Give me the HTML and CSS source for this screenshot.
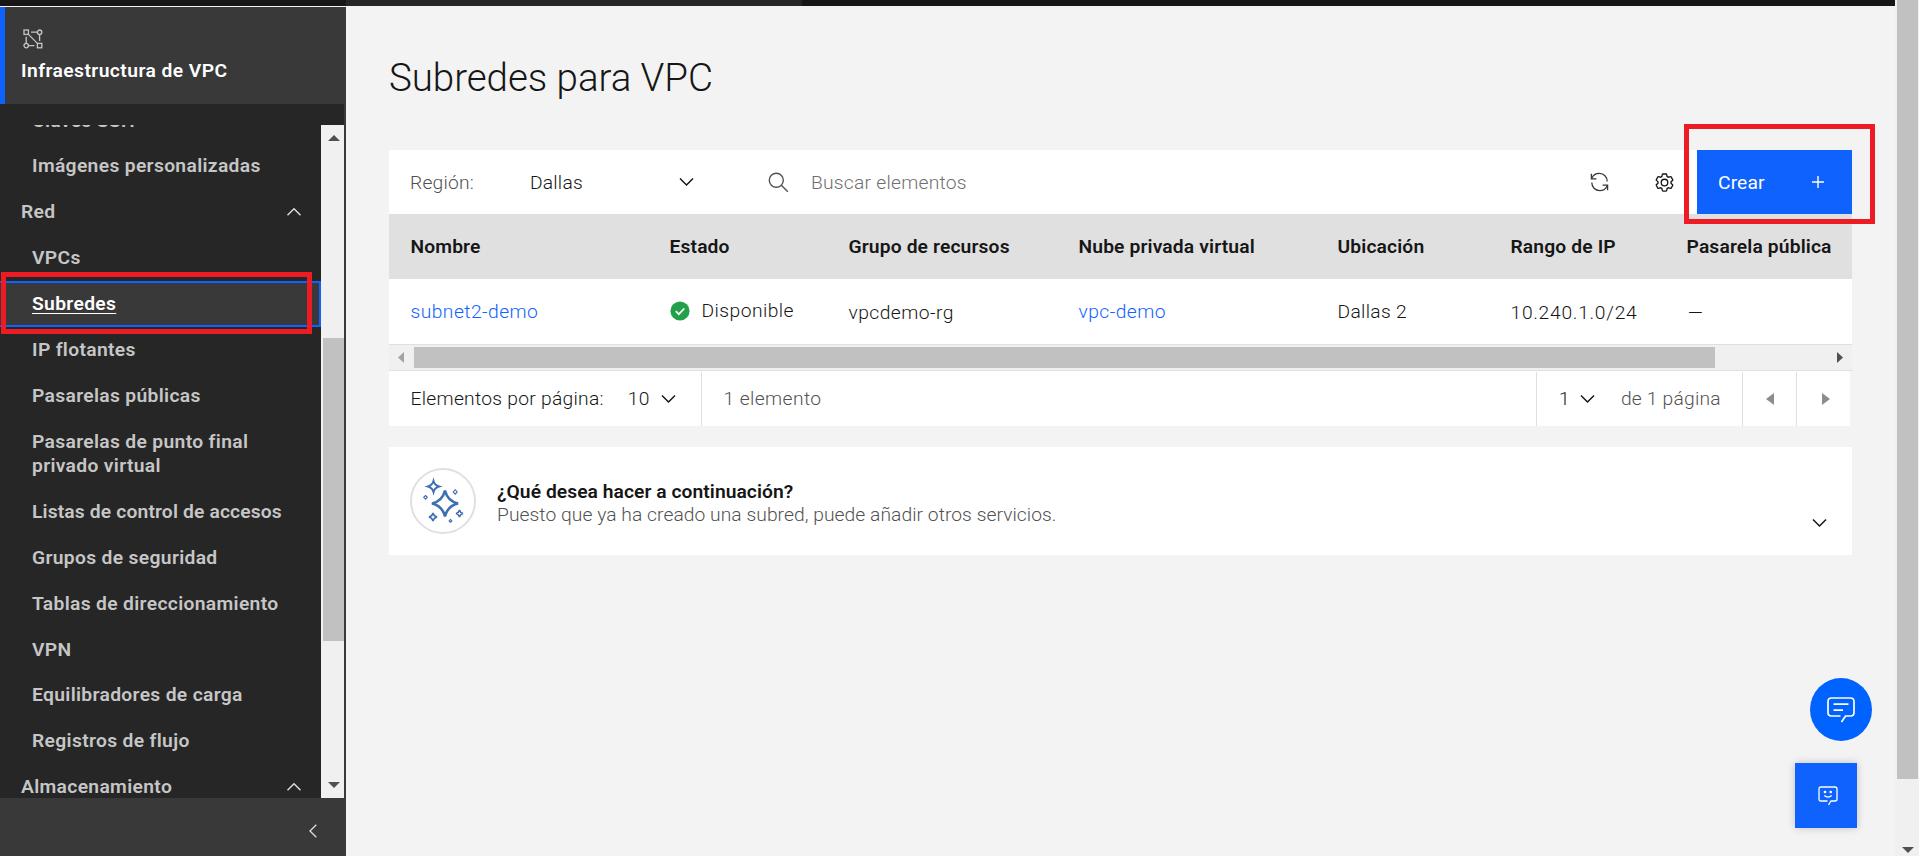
FILE: index.html
```
<!DOCTYPE html>
<html lang="es">
<head>
<meta charset="utf-8">
<title>Subredes para VPC</title>
<link rel="stylesheet" href="styles.css">
</head>
<body>
<div class="topbar"></div>
<div class="shell">
  <aside class="sidebar">
    <header class="side-head">
      <svg class="vpc-icon" width="20" height="20" viewBox="0 0 20 20" fill="none" stroke="#c6c6c6" stroke-width="1.3"><rect x="1" y="1" width="4.4" height="4.4"/><rect x="14.4" y="14.4" width="4.4" height="4.4"/><circle cx="16.6" cy="3.2" r="2.2"/><circle cx="3.2" cy="16.6" r="2.2"/><path d="M8 3.2h6.4M16.6 5.4V12M3.2 7.8v6.6M5.4 16.6h6M5.4 5.4l9 9"/></svg>
      <div class="side-title">Infraestructura de VPC</div>
    </header>
    <div class="nav-wrap">
      <nav class="nav">
        <a class="item">Claves SSH</a>
        <a class="item">Imágenes personalizadas</a>
        <a class="item group">Red <svg width="16" height="10" viewBox="0 0 16 10" fill="none" stroke="#e0e0e0" stroke-width="1.4"><path d="M1.5 8.3 8 1.8l6.500 6.500"/></svg></a>
        <a class="item">VPCs</a>
        <a class="item current"><span>Subredes</span></a>
        <a class="item">IP flotantes</a>
        <a class="item">Pasarelas públicas</a>
        <a class="item tall">Pasarelas de punto final<br>privado virtual</a>
        <a class="item acl">Listas de control de accesos</a>
        <a class="item">Grupos de seguridad</a>
        <a class="item">Tablas de direccionamiento</a>
        <a class="item">VPN</a>
        <a class="item short">Equilibradores de carga</a>
        <a class="item">Registros de flujo</a>
        <a class="item group">Almacenamiento <svg width="16" height="10" viewBox="0 0 16 10" fill="none" stroke="#e0e0e0" stroke-width="1.400"><path d="M1.500 8.300 8 1.800l6.500 6.500"/></svg></a>
      </nav>
      <div class="vscroll">
        <svg width="12" height="6" viewBox="0 0 12 6"><path d="M0 6 6 0l6 6z" fill="#505050"/></svg>
        <div class="vthumb"></div>
        <svg width="12" height="6" viewBox="0 0 12 6"><path d="M0 0l6 6 6-6z" fill="#505050"/></svg>
      </div>
    </div>
    <footer class="side-foot"><svg width="10" height="14" viewBox="0 0 10 14" fill="none" stroke="#e0e0e0" stroke-width="1.3"><path d="M8.300 .8 2 7l6.300 6.200"/></svg></footer>
  </aside>

  <main class="main">
    <h1>Subredes para VPC</h1>
    <section class="card">
      <div class="toolbar">
        <label class="region">Región:</label>
        <div class="select"><span>Dallas</span><svg width="15" height="10" viewBox="0 0 15 10" fill="none" stroke="#161616" stroke-width="1.500"><path d="M1 1.500l6.500 6.500 6.500-6.500"/></svg></div>
        <svg class="search-icon" width="21" height="21" viewBox="0 0 21 21" fill="none" stroke="#525252" stroke-width="1.400"><circle cx="8.300" cy="8.300" r="7"/><path d="M13.300 13.300l6.500 6.500"/></svg>
        <span class="placeholder">Buscar elementos</span>
        <svg class="refresh" width="19" height="20" viewBox="0 0 19 20" fill="none" stroke="#393939" stroke-width="1.300"><path d="M1.400 1.800v5h5M1.700 6.300C3.200 3 6 1.400 9.300 1.400c4.600 0 7.900 3.500 7.900 8M17.600 18.200v-5h-5M17.300 13.700c-1.500 3.300-4.300 4.900-7.600 4.900-4.600 0-7.900-3.500-7.900-8"/></svg>
        <svg class="gear" width="21" height="21" viewBox="0 0 32 32" fill="#161616"><path d="M27 16.760V15.240l1.920-1.680a2 2 0 0 0 .41-2.550l-2.360-4a2 2 0 0 0-2.360-.89l-2.430.82a11.350 11.350 0 0 0-1.310-.75l-.510-2.520a2 2 0 0 0-2-1.610h-4.680a2 2 0 0 0-2 1.610l-.51 2.520a11.480 11.480 0 0 0-1.320.75l-2.430-.82a2 2 0 0 0-2.360.89l-2.360 4a2 2 0 0 0 .41 2.510L5 15.240v1.530l-1.890 1.680a2 2 0 0 0-.41 2.550l2.360 4a2 2 0 0 0 2.360.89l2.430-.82a11.350 11.350 0 0 0 1.310.75l.51 2.520a2 2 0 0 0 2 1.610h4.720a2 2 0 0 0 2-1.610l.51-2.520a11.480 11.480 0 0 0 1.320-.75l2.420.82a2 2 0 0 0 2.360-.89l2.360-4a2 2 0 0 0-.41-2.510ZM25.210 24l-3.430-1.160a8.860 8.860 0 0 1-2.710 1.570L18.360 28h-4.720l-.71-3.550a9.360 9.360 0 0 1-2.700-1.570L6.790 24l-2.360-4 2.720-2.400a8.900 8.900 0 0 1 0-3.130L4.430 12l2.360-4 3.430 1.160a8.860 8.860 0 0 1 2.710-1.570L13.640 4h4.720l.71 3.550a9.360 9.360 0 0 1 2.700 1.570L25.210 8l2.360 4-2.720 2.400a8.900 8.900 0 0 1 0 3.130L27.570 20ZM16 22a6 6 0 1 1 6-6 6 6 0 0 1-6 6Zm0-10a4 4 0 1 0 4 4 4 4 0 0 0-4-4Z"/></svg>
        <button class="create"><span>Crear</span><svg width="12" height="12" viewBox="0 0 12 12" stroke="#fff" stroke-width="1.400"><path d="M6 0v12M0 6h12"/></svg></button>
      </div>
      <div class="grid thead">
        <div>Nombre</div><div>Estado</div><div>Grupo de recursos</div><div>Nube privada virtual</div><div>Ubicación</div><div>Rango de IP</div><div>Pasarela pública</div>
      </div>
      <div class="grid trow">
        <div class="link">subnet2-demo</div>
        <div class="state"><svg width="20" height="20" viewBox="0 0 20 20"><circle cx="10" cy="10" r="9.600" fill="#24a148"/><path d="M5.800 10.200l3 3 5.500-5.700" fill="none" stroke="#fff" stroke-width="1.700"/></svg>Disponible</div>
        <div class="low">vpcdemo-rg</div>
        <div class="link">vpc-demo</div>
        <div class="loc">Dallas 2</div>
        <div class="low ip">10.240.1.0/24</div>
        <div class="low"><span class="dash">–</span></div>
      </div>
      <div class="hscroll">
        <svg width="6" height="11" viewBox="0 0 6 11"><path d="M6 0v11L0 5.500z" fill="#a3a3a3"/></svg>
        <div class="hthumb"></div>
        <svg width="6" height="11" viewBox="0 0 6 11"><path d="M0 0v11l6-5.500z" fill="#505050"/></svg>
      </div>
    </section>
    <section class="pager">
      <div class="per-page"><span>Elementos por página:</span><span class="ten">10</span><svg width="15" height="10" viewBox="0 0 15 10" fill="none" stroke="#161616" stroke-width="1.500"><path d="M1 1.500l6.500 6.500 6.500-6.500"/></svg></div>
      <div class="total">1 elemento</div>
      <div class="page-num"><span>1</span><svg width="15" height="10" viewBox="0 0 15 10" fill="none" stroke="#161616" stroke-width="1.500"><path d="M1 1.500l6.500 6.500 6.500-6.500"/></svg><span class="of">de 1 página</span></div>
      <div class="arrow"><svg width="8" height="12" viewBox="0 0 8 12"><path d="M8 0v12L0 6z" fill="#8d8d8d"/></svg></div>
      <div class="arrow"><svg width="8" height="12" viewBox="0 0 8 12"><path d="M0 0v12l8-6z" fill="#8d8d8d"/></svg></div>
    </section>
    <section class="next">
      <svg width="66" height="66" viewBox="0 0 66 66" fill="none" stroke="#3d70b2"><circle cx="33" cy="33" r="32" stroke="#e0e0e0" stroke-width="2"/><path stroke-width="2.600" d="M35 22.500q2.500 10.500 13 13-10.500 2.500-13 13-2.500-10.500-13-13 10.500-2.500 13-13z"/><path stroke-width="2" d="M23.500 13q1.200 4.300 5.500 5.500-4.300 1.200-5.500 5.500-1.200-4.300-5.500-5.500 4.300-1.200 5.500-5.500z"/><path stroke-width="1.600" d="M23 45q.8 3.200 4 4-3.200.8-4 4-.8-3.200-4-4 3.200-.8 4-4zM49.500 42q.7 2.800 3.500 3.500-2.800.7-3.500 3.500-.7-2.800-3.500-3.500 2.800-.7 3.500-3.500z"/><path stroke-width="1.100" d="M15.500 27.500l1.800 1.800-1.800 1.800-1.800-1.800zM45.200 21.700l2 2.200-2 2.200-2-2.200zM40.500 51.500l1.400 1.400-1.400 1.400-1.400-1.400z"/></svg>
      <div class="next-text"><strong>¿Qué desea hacer a continuación?</strong><p>Puesto que ya ha creado una subred, puede añadir otros servicios.</p></div>
      <svg class="next-chev" width="15" height="10" viewBox="0 0 15 10" fill="none" stroke="#161616" stroke-width="1.500"><path d="M1 1.500l6.500 6.500 6.500-6.500"/></svg>
    </section>
  </main>
</div>
<div class="page-scroll">
  <div class="page-thumb"></div>
  <svg width="12" height="6" viewBox="0 0 12 6"><path d="M0 0l6 6 6-6z" fill="#505050"/></svg>
</div>
<div class="mark mark-nav"></div>
<div class="mark mark-create"></div>
<div class="chat"><svg width="28" height="26" viewBox="0 0 28 26" fill="none" stroke="#fff" stroke-width="1.700"><path d="M13.500 19H4.500Q1 19 1 15.500V4.500Q1 1 4.500 1h19Q27 1 27 4.500v11Q27 19 23.500 19h-5L14.500 25M6.500 7.200h15M6.500 13.200H16"/></svg></div>
<div class="feedback"><svg width="20" height="20" viewBox="0 0 20 20" fill="none" stroke="#fff" stroke-width="1.300"><path d="M9.500 15H3Q1 15 1 13V3Q1 1 3 1h14Q19 1 19 3v10Q19 15 17 15h-4L10.500 19M6.300 9.500q3.700 3.200 7.400 0"/><circle cx="7" cy="6" r=".7" fill="#fff"/><circle cx="12.700" cy="6" r=".7" fill="#fff"/></svg></div>
</body>
</html>
```
FILE: styles.css
```
* { box-sizing: border-box; }
body {
  margin: 0; height: 856px; overflow: hidden; position: relative;
  background: #f3f3f3; color: #161616;
  font-family: Roboto, "Liberation Sans", sans-serif;
  font-size: 19.25px; font-weight: 300; line-height: 24px; letter-spacing: .2px;
}
svg { display: block; flex: none; }
.topbar { height: 6px; width: 1895px; background: linear-gradient(90deg, #161616 346px, #262626 346px, #262626 802px, #161616 802px); }
.shell { display: flex; height: 850px; padding-top: 1px; }

.sidebar { width: 346px; display: flex; flex-direction: column; background: #393939; }
.side-head { height: 97px; border-left: 5px solid #0f62fe; padding: 22px 0 0 16px; }
.vpc-icon { margin-left: 2px; }
.side-title { margin-top: 10px; color: #fff; font-weight: 600; letter-spacing: .44px; }
.nav-wrap { width: 344px; height: 694px; padding-top: 21px; display: flex; background: #262626; }
.nav { width: 321px; height: 673px; overflow: hidden; }
.item {
  display: flex; align-items: center; height: 46px; padding: 0 0 1px 32px;
  color: #c6c6c6; font-weight: 600; letter-spacing: .34px;
}
.item:first-child { margin-top: -28px; padding: 2px 0 0 32px; }
.group { padding-left: 21px; justify-content: space-between; padding-right: 19px; }
.tall { height: 70px; }
.acl { letter-spacing: .15px; }
.short { height: 45px; padding-bottom: 1px; }
.current { background: #393939; border: 2px solid #0f62fe; border-left-width: 0; color: #fff; }
.current span { text-decoration: underline; text-decoration-thickness: 1px; text-underline-offset: 3px; text-decoration-skip-ink: none; }
.vscroll { width: 23px; background: #f0f0f0; padding: 10px 0; display: flex; flex-direction: column; align-items: center; }
.vscroll svg { margin-left: 2px; }
.vthumb { width: 21px; height: 303px; margin: 197px 0 auto 2px; background: #c1c1c1; }
.side-foot { height: 58px; display: flex; align-items: center; padding: 7px 0 0 308px; }

.main { width: 1506px; padding-left: 43px; }
h1 { margin: 0; height: 143px; padding-top: 46px; font-size: 38.5px; line-height: 50px; font-weight: 300; letter-spacing: -.05px; }
.toolbar { height: 64px; display: flex; align-items: center; background: #fff; }
.region { width: 119px; padding-left: 21px; padding-top: 1px; color: #525252; }
.select { width: 186px; margin-left: 22px; display: flex; justify-content: space-between; align-items: center; padding-right: 22px; }
.select span { padding-top: 1px; }
.search-icon { margin: 0 21px 0 52px; }
.placeholder { color: #6f6f6f; flex: 1; padding: 1px 0 0 1px; letter-spacing: .24px; }
.refresh { margin-right: 45px; }
.gear { margin-right: 22px; }
.create {
  width: 155px; height: 64px; border: 0; background: #0f62fe; color: #fff; padding: 0 28px 0 21px;
  display: flex; align-items: center; justify-content: space-between; font: inherit; font-weight: 400; letter-spacing: .1px;
}
.create span { padding-top: 1px; }
.card { width: 1463px; }
.grid { display: grid; grid-template-columns: 259px 179px 230px 259px 173px 176px 187px; height: 65px; align-items: center; }
.grid > div { padding-left: 21.5px; white-space: nowrap; }
.thead { background: #e0e0e0; font-weight: 600; letter-spacing: .14px; }
.trow { background: #fff; letter-spacing: .45px; }
.trow > .link { color: #0f62fe; padding-top: 1px; }
.state { display: flex; align-items: center; gap: 12px; padding-bottom: 2px; }
.loc { letter-spacing: .3px; padding-top: 1px; }
.trow > .low { padding-top: 3px; }
.trow > .ip { letter-spacing: .72px; }
.dash { display: inline-block; transform: scaleX(1.35); transform-origin: left; }
.hscroll { height: 27px; background: #f0f0f0; border: solid #e0e0e0; border-width: 1px 0; display: flex; align-items: center; padding-left: 9px; }
.hthumb { width: 1301px; height: 21px; background: #c1c1c1; margin: 0 122px 0 10px; }

.pager { width: 1461px; height: 55px; padding-top: 1px; background: #fff; display: flex; align-items: stretch; }
.pager > div { display: flex; align-items: center; border-right: 1px solid #e0e0e0; }
.pager .per-page { width: 313px; padding-left: 21.5px; letter-spacing: .27px; }
.ten { margin: 0 11px 0 24px; }
.pager .total { width: 835px; padding-left: 21.5px; color: #525252; letter-spacing: .4px; }
.pager .page-num { width: 206px; padding-left: 22px; }
.page-num svg { margin: 0 26px 0 10px; }
.of { color: #525252; letter-spacing: .2px; white-space: nowrap; }
.pager .arrow { width: 54px; justify-content: center; }
.pager .arrow:last-child { width: 53px; border: 0; padding-left: 5px; }

.next { width: 1463px; height: 108px; margin-top: 21px; padding: 0 25px 0 21px; background: #fff; display: flex; align-items: center; }
.next-text { margin-left: 21px; flex: 1; line-height: 23px; letter-spacing: .05px; padding-top: 3px; }
.next-text strong { font-weight: 600; }
.next-text p { margin: 0; color: #525252; }
.next-chev { margin-top: 44px; }

.page-scroll { position: absolute; top: 0; right: 0; width: 24px; height: 856px; background: #f0f0f0; }
.page-thumb { width: 21px; height: 779px; margin: 0 0 68px 2px; background: #c1c1c1; }
.page-scroll svg { margin-left: 7px; }
.mark { position: absolute; border: 5px solid #ed1c24; }
.mark-nav { left: 1px; top: 272px; width: 311px; height: 62px; }
.mark-create { left: 1684px; top: 124px; width: 191px; height: 100px; }
.chat, .feedback { position: absolute; display: flex; align-items: center; justify-content: center; }
.chat { left: 1810px; top: 678px; width: 62px; height: 63px; border-radius: 50%; background: #0062ff; }
.feedback { left: 1795px; top: 763px; width: 62px; height: 65px; background: #0f62fe; box-shadow: 0 0 8px rgba(0,0,0,.2); padding-left: 3px; }
```
